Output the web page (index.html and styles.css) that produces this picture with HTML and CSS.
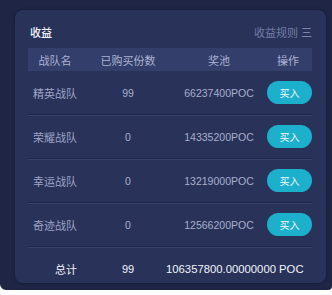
FILE: index.html
```html
<!DOCTYPE html>
<html lang="zh">
<head>
<meta charset="utf-8">
<link rel="stylesheet" href="styles.css">
</head>
<body>
<div class="screen">
  <div class="card">
    <div class="title-bar">
      <span class="title">收益</span>
      <span class="rules">收益规则 <span class="menu">三</span></span>
    </div>
    <div class="grid head">
      <span>战队名</span>
      <span>已购买份数</span>
      <span>奖池</span>
      <span class="op">操作</span>
    </div>
    <div class="grid row">
      <span class="name">精英战队</span>
      <span class="num">99</span>
      <span class="num">66237400POC</span>
      <span class="op"><button class="buy">买入</button></span>
    </div>
    <div class="grid row">
      <span class="name">荣耀战队</span>
      <span class="num">0</span>
      <span class="num">14335200POC</span>
      <span class="op"><button class="buy">买入</button></span>
    </div>
    <div class="grid row">
      <span class="name">幸运战队</span>
      <span class="num">0</span>
      <span class="num">13219000POC</span>
      <span class="op"><button class="buy">买入</button></span>
    </div>
    <div class="grid row">
      <span class="name">奇迹战队</span>
      <span class="num">0</span>
      <span class="num">12566200POC</span>
      <span class="op"><button class="buy">买入</button></span>
    </div>
    <div class="total">
      <span class="t-label">总计</span>
      <span class="t-count">99</span>
      <span class="t-value">106357800.00000000 POC</span>
    </div>
  </div>
</div>
</body>
</html>
```
FILE: styles.css
```css
* { box-sizing: border-box; }
html, body { margin: 0; padding: 0; background: #ffffff; }
body {
  font-family: "Liberation Sans", "Noto Sans CJK SC", sans-serif;
  width: 332px;
  height: 295px;
  overflow: hidden;
}
.screen {
  width: 332px;
  height: 290px;
  background: #1e2545;
  padding: 10px 6px 0 15px;
  border-radius: 0 0 4px 6px;
}
.card {
  width: 311px;
  height: 273px;
  background: #29335a;
  border-radius: 8px;
  padding: 0 14px 0 13px;
  box-shadow: 0 0 3px rgba(10, 14, 35, 0.5);
}
.title-bar {
  height: 38px;
  padding-top: 14px;
  display: flex;
  justify-content: space-between;
  line-height: 18px;
}
.title {
  color: #f2f4fb;
  font-size: 11px;
  font-weight: 500;
  padding-left: 2px;
}
.rules {
  color: #737ca3;
  font-size: 11px;
}
.menu { color: #8c94b8; }
.grid {
  display: grid;
  grid-template-columns: 54px 92px 90px 48px;
  align-items: center;
  justify-items: center;
}
.head {
  height: 23px;
  background: #333e6a;
  color: #aab2d3;
  font-size: 11px;
}
.head .op { justify-self: end; padding-right: 13px; }
.row {
  height: 44px;
  border-bottom: 1px solid #1f2747;
  box-shadow: 0 1px 0 #37426d;
  font-size: 11px;
  color: #9ca4c6;
}
.row .num { font-size: 10.5px; color: #a7aecd; }
.row .op { justify-self: end; display: flex; }
.buy {
  width: 45px;
  height: 23px;
  border: none;
  border-radius: 12px;
  background: #1cb0cc;
  color: #f4fbff;
  font-family: "Liberation Sans", "Noto Sans CJK SC", sans-serif;
  font-size: 10px;
  padding: 0;
}
.total {
  height: 36px;
  padding-top: 8px;
  display: grid;
  grid-template-columns: 76px 48px 1fr;
  align-items: center;
  justify-items: center;
  color: #f2f4fb;
  font-size: 11px;
}
.t-label { padding-left: 0; }
.t-count { font-size: 11px; }
.t-value { font-size: 11.3px; justify-self: start; padding-left: 14px; }
```
